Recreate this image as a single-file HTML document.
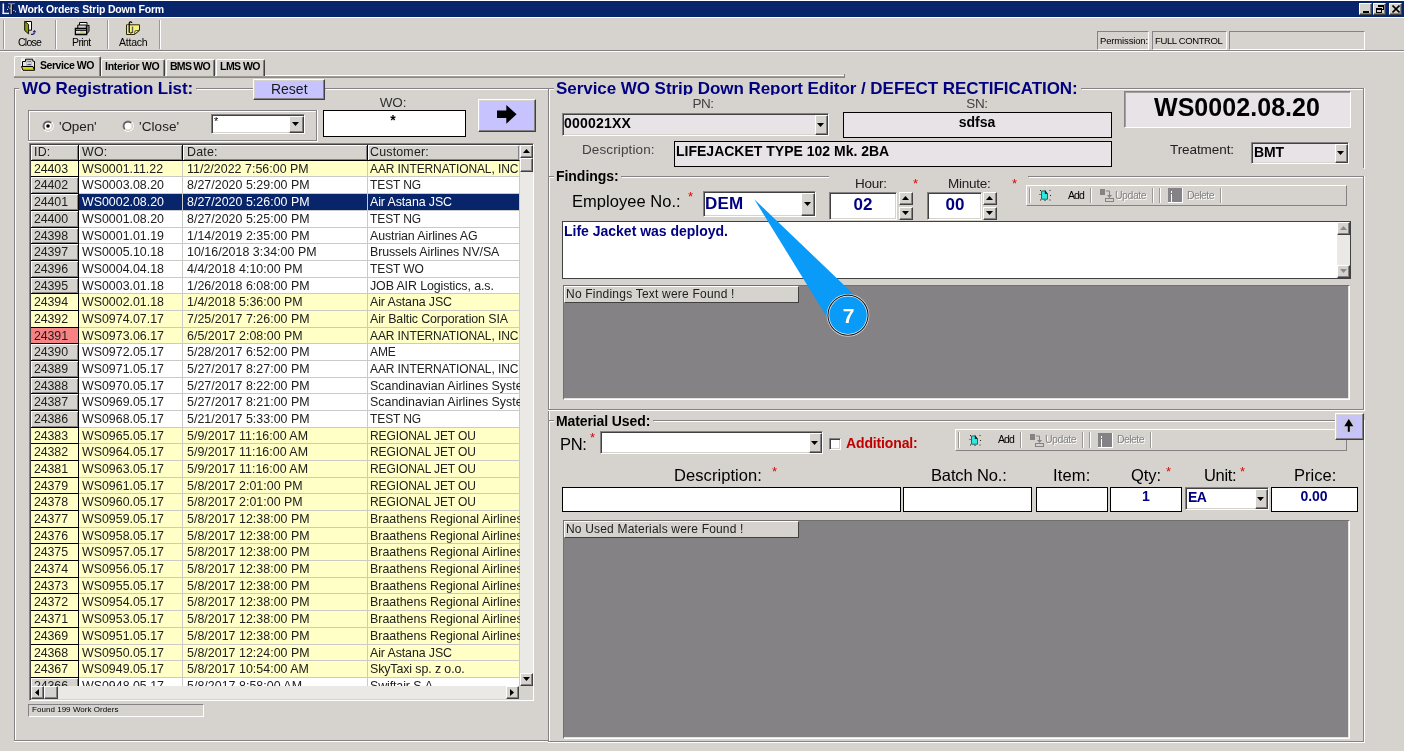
<!DOCTYPE html>
<html><head><meta charset="utf-8"><title>Work Orders Strip Down Form</title>
<style>
html,body{margin:0;padding:0}
body{transform:translateZ(0);filter:blur(0.4px);width:1405px;height:751px;overflow:hidden;background:#d6d3ce;position:relative;font-family:"Liberation Sans",sans-serif;}
body div,body svg.a,.grid div{position:absolute;box-sizing:border-box}
.t{white-space:nowrap;will-change:transform}
</style></head>
<body>
<div style="left:0px;top:0px;width:1405px;height:1px;background:#fff;"></div>
<div style="left:0px;top:1px;width:1405px;height:16px;background:#08246b;"></div>
<svg class="a" style="left:0px;top:0px" width="18" height="17" viewBox="0 0 18 17"><rect x="2.500" y="3.500" width="1.600" height="10.500" fill="#f0f0f0"/><rect x="2.500" y="12.700" width="6.500" height="1.400" fill="#f0f0f0"/><rect x="8" y="3" width="7" height="1.200" fill="#6878b0"/><rect x="10.500" y="4" width="1.600" height="10" fill="#b8b070"/><rect x="12.100" y="5" width="1" height="9" fill="#080820"/><rect x="8" y="6.500" width="1" height="1" fill="#e8e8ff"/><rect x="7" y="9" width="1" height="1" fill="#e8e8ff"/><rect x="9.500" y="7.800" width="1" height="1" fill="#e8e8ff"/><rect x="13.300" y="10" width="1" height="1" fill="#e8e8ff"/><rect x="15" y="11.200" width="1" height="1" fill="#e8e8ff"/></svg>
<div class="t" style="left:18px;top:2.86px;font-size:10.5px;line-height:13px;color:#fff;font-weight:bold;letter-spacing:-0.182px;">Work Orders Strip Down Form</div>
<div style="left:1359px;top:3px;width:13px;height:12px;background:#d6d3ce;border:1px solid;border-color:#fff #424142 #424142 #fff;box-shadow:inset -1px -1px 0 #848284,inset 1px 1px 0 #d6d3ce;"><svg class="a" style="left:3px;top:7px" width="6" height="2"><rect width="6" height="2" fill="#000"/></svg></div>
<div style="left:1373px;top:3px;width:13px;height:12px;background:#d6d3ce;border:1px solid;border-color:#fff #424142 #424142 #fff;box-shadow:inset -1px -1px 0 #848284,inset 1px 1px 0 #d6d3ce;"><svg class="a" style="left:1px;top:0px" width="10" height="10" viewBox="0 0 10 10"><path d="M3 1h6v2h-6zM8 1h1v5h-1zM7 5h2v1h-2zM1 4h6v2h-6zM1 4h1v5h-1zM6 4h1v5h-1zM1 8h6v1h-6z" fill="#000"/></svg></div>
<div style="left:1389px;top:3px;width:13px;height:12px;background:#d6d3ce;border:1px solid;border-color:#fff #424142 #424142 #fff;box-shadow:inset -1px -1px 0 #848284,inset 1px 1px 0 #d6d3ce;"><svg class="a" style="left:2px;top:1px" width="8" height="8" viewBox="0 0 8 8"><path d="M0.5 0.5l7 7M7.5 0.5l-7 7" stroke="#000" stroke-width="1.6"/></svg></div>
<div style="left:0px;top:17px;width:1404px;height:1px;background:#fff;"></div>
<div style="left:3px;top:20px;width:1px;height:29px;background:#9a9894;"></div>
<div style="left:4px;top:20px;width:1px;height:29px;background:#fff;"></div>
<div style="left:55px;top:20px;width:1px;height:29px;background:#9a9894;"></div>
<div style="left:56px;top:20px;width:1px;height:29px;background:#fff;"></div>
<div style="left:107px;top:20px;width:1px;height:29px;background:#9a9894;"></div>
<div style="left:108px;top:20px;width:1px;height:29px;background:#fff;"></div>
<div style="left:159px;top:20px;width:1px;height:29px;background:#9a9894;"></div>
<div style="left:160px;top:20px;width:1px;height:29px;background:#fff;"></div>
<div style="left:0px;top:50px;width:1404px;height:1px;background:#848284;"></div>
<div style="left:0px;top:51px;width:1404px;height:1px;background:#fff;"></div>
<div style="left:1404px;top:0px;width:1px;height:751px;background:#fff;"></div>
<svg class="a" style="left:18px;top:18px" width="28" height="20" viewBox="18 18 28 20">
<path d="M25.200 21.500h6.300v8.700h-6.300z" fill="#fffff8" stroke="#000" stroke-width="1"/>
<path d="M24.700 21.300l3.900 3.200v9.400l-3.900-3.400z" fill="#8c9418" stroke="#181800" stroke-width="1" stroke-linejoin="round"/>
<path d="M31 34.300h1.700q1.700 0 1.700-1.800" fill="none" stroke="#18187c" stroke-width="1.300"/>
<path d="M32.600 32.200h3.700l-1.900-2.300z" fill="#18187c"/></svg>
<svg class="a" style="left:68px;top:18px" width="28" height="20" viewBox="68 18 28 20">
<path d="M79.500 22.500h7.500v3.500h-7.500z" fill="#fff" stroke="#000"/>
<path d="M77.800 25h8.500v3.500h-8.500z" fill="#d0d0d0" stroke="#000"/>
<path d="M86.700 26.200l2.300-1v6.300l-2.300 2.300z" fill="#a8a8a8" stroke="#000"/>
<path d="M75.400 28.500h11.200v6h-11.200z" fill="#ececec" stroke="#000" stroke-width="1.300"/>
<path d="M76 30.300h10" stroke="#000" stroke-width="1.100"/>
<rect x="80" y="31" width="4.500" height="1.600" fill="#c8e040"/>
<path d="M76.500 33.300h9" stroke="#909090"/></svg>
<svg class="a" style="left:120px;top:18px" width="28" height="20" viewBox="120 18 28 20">
<path d="M126.500 24.800h13v5.500l-5 4.200h-8z" fill="#f4f47c" stroke="#302800" stroke-width="1"/>
<path d="M127 25.300h2.200v8.700h-2.200z" fill="#e4e0b0"/>
<path d="M134.500 34.300l.5-3.400 4.300-.6z" fill="#fffff0" stroke="#302800" stroke-width=".8"/>
<path d="M129.200 32.500v-9.300q0-1.300 1.300-1.300t1.300 1.100" fill="none" stroke="#000" stroke-width="1.200"/>
<path d="M132.500 26.500v6.300" stroke="#606060" stroke-width="1.400"/>
<path d="M129.200 32.300q1.600 1.700 3.300 0" fill="none" stroke="#000"/></svg>
<div class="t" style="left:18px;top:36.16px;font-size:10.5px;line-height:13px;color:#000;letter-spacing:-0.769px;">Close</div>
<div class="t" style="left:72px;top:36.16px;font-size:10.5px;line-height:13px;color:#000;letter-spacing:-0.618px;">Print</div>
<div class="t" style="left:119px;top:36.16px;font-size:10.5px;line-height:13px;color:#000;letter-spacing:-0.211px;">Attach</div>
<div style="left:1097px;top:31px;width:52px;height:19px;border:1px solid;border-color:#848284 #fff #fff #848284;"></div>
<div style="left:1152px;top:31px;width:75px;height:19px;border:1px solid;border-color:#848284 #fff #fff #848284;"></div>
<div style="left:1229px;top:31px;width:136px;height:19px;border:1px solid;border-color:#848284 #fff #fff #848284;"></div>
<div class="t" style="left:1099.5px;top:35.01px;font-size:9.5px;line-height:11px;color:#000;letter-spacing:-0.148px;">Permission:</div>
<div class="t" style="left:1155px;top:35.01px;font-size:9.5px;line-height:11px;color:#000;letter-spacing:-0.372px;">FULL CONTROL</div>
<div style="left:101px;top:75px;width:743px;height:1px;background:#fff;"></div>
<div style="left:14px;top:76px;width:831px;height:1px;background:#a09c98;"></div>
<div style="left:14px;top:77px;width:831px;height:1px;background:#8c8884;"></div>
<div style="left:844px;top:74px;width:1px;height:3px;background:#848284;"></div>
<div style="left:101px;top:59px;width:64px;height:17px;background:#d6d3ce;border-top:1px solid #fff;border-left:1px solid #fff;border-right:1px solid #424142;box-shadow:inset -1px 0 0 #848284;border-radius:2px 2px 0 0;"></div>
<div style="left:166px;top:59px;width:49px;height:17px;background:#d6d3ce;border-top:1px solid #fff;border-left:1px solid #fff;border-right:1px solid #424142;box-shadow:inset -1px 0 0 #848284;border-radius:2px 2px 0 0;"></div>
<div style="left:216px;top:59px;width:49px;height:17px;background:#d6d3ce;border-top:1px solid #fff;border-left:1px solid #fff;border-right:1px solid #424142;box-shadow:inset -1px 0 0 #848284;border-radius:2px 2px 0 0;"></div>
<div style="left:14px;top:56px;width:87px;height:20px;background:#d6d3ce;border-top:1px solid #fff;border-left:1px solid #fff;border-right:1px solid #424142;box-shadow:inset -1px 0 0 #848284;border-radius:2px 2px 0 0;"></div>
<svg class="a" style="left:14px;top:54px" width="28" height="20" viewBox="14 54 28 20">
<rect x="21" y="58.300" width="14" height="13" fill="#f2f2ee"/>
<path d="M22.500 66.500v-5h3v-2.300h7.300v2h1.700v9" fill="#e4e4e4" stroke="#000" stroke-width="1"/>
<rect x="26.500" y="60.300" width="5" height="5.200" fill="#f8f8f8" stroke="#a8a8a8" stroke-width=".6"/>
<path d="M27.300 61.700h3.700" stroke="#687070" stroke-width="1.200"/>
<path d="M27.300 64.300h3.700" stroke="#202060" stroke-width=".9"/>
<path d="M21.500 66.500h11.500l1.500 3.800h-11.500z" fill="#d4d418" stroke="#000" stroke-width="1"/></svg>
<div class="t" style="left:40px;top:59.06px;font-size:10.5px;line-height:13px;color:#000;font-weight:bold;letter-spacing:-0.436px;">Service WO</div>
<div class="t" style="left:105px;top:59.86px;font-size:10.5px;line-height:13px;color:#000;font-weight:bold;letter-spacing:-0.242px;">Interior WO</div>
<div class="t" style="left:170px;top:59.86px;font-size:10.5px;line-height:13px;color:#000;font-weight:bold;letter-spacing:-0.721px;">BMS WO</div>
<div class="t" style="left:220px;top:59.86px;font-size:10.5px;line-height:13px;color:#000;font-weight:bold;letter-spacing:-0.526px;">LMS WO</div>
<div style="left:14px;top:88px;width:5px;height:1px;background:#848284;"></div>
<div style="left:15px;top:89px;width:4px;height:1px;background:#fff;"></div>
<div style="left:196px;top:88px;width:57px;height:1px;background:#848284;"></div>
<div style="left:197px;top:89px;width:56px;height:1px;background:#fff;"></div>
<div style="left:325px;top:88px;width:224px;height:1px;background:#848284;"></div>
<div style="left:326px;top:89px;width:223px;height:1px;background:#fff;"></div>
<div style="left:14px;top:88px;width:1px;height:653px;background:#848284;"></div>
<div style="left:15px;top:89px;width:1px;height:652px;background:#fff;"></div>
<div style="left:548px;top:88px;width:1px;height:653px;background:#848284;"></div>
<div style="left:549px;top:88px;width:1px;height:654px;background:#fff;"></div>
<div style="left:14px;top:740px;width:535px;height:1px;background:#848284;"></div>
<div style="left:14px;top:741px;width:536px;height:1px;background:#fff;"></div>
<div class="t" style="left:22px;top:78.81px;font-size:17px;line-height:20px;color:#000080;font-weight:bold;letter-spacing:-0.132px;">WO Registration List:</div>
<div style="left:253px;top:79px;width:72px;height:21px;background:#c6c3ff;border:1px solid;border-color:#fff #424142 #424142 #fff;box-shadow:inset -1px -1px 0 #848284,inset 1px 1px 0 #d6d3ce;"></div>
<div class="t" style="left:270.5px;top:81.45px;font-size:14px;line-height:17px;color:#181818;letter-spacing:-0.014px;">Reset</div>
<div style="left:28px;top:110px;width:289px;height:1px;background:#848284;"></div>
<div style="left:29px;top:111px;width:288px;height:1px;background:#fff;"></div>
<div style="left:28px;top:110px;width:1px;height:31px;background:#848284;"></div>
<div style="left:29px;top:111px;width:1px;height:30px;background:#fff;"></div>
<div style="left:316px;top:110px;width:1px;height:31px;background:#848284;"></div>
<div style="left:317px;top:110px;width:1px;height:32px;background:#fff;"></div>
<div style="left:28px;top:140px;width:289px;height:1px;background:#848284;"></div>
<div style="left:28px;top:141px;width:290px;height:1px;background:#fff;"></div>
<svg class="a" style="left:42px;top:120px" width="12" height="12" viewBox="0 0 12 12"><circle cx="6" cy="6" r="5.500" fill="#848284"/><path d="M1.800 10.200A5.500 5.500 0 0 0 10.200 1.800z" fill="#fff"/><circle cx="6" cy="6" r="4.500" fill="#424142"/><path d="M2.500 9.500A4.500 4.500 0 0 0 9.500 2.500z" fill="#d6d3ce"/><circle cx="6" cy="6" r="3.600" fill="#fff"/><circle cx="6" cy="6" r="1.8" fill="#000"/></svg>
<svg class="a" style="left:122px;top:120px" width="12" height="12" viewBox="0 0 12 12"><circle cx="6" cy="6" r="5.500" fill="#848284"/><path d="M1.800 10.200A5.500 5.500 0 0 0 10.200 1.800z" fill="#fff"/><circle cx="6" cy="6" r="4.500" fill="#424142"/><path d="M2.500 9.500A4.500 4.500 0 0 0 9.500 2.500z" fill="#d6d3ce"/><circle cx="6" cy="6" r="3.600" fill="#fff"/></svg>
<div class="t" style="left:59px;top:119.32px;font-size:13.5px;line-height:16px;color:#202020;letter-spacing:-0.113px;">&#x27;Open&#x27;</div>
<div class="t" style="left:139px;top:119.32px;font-size:13.5px;line-height:16px;color:#202020;letter-spacing:0.076px;">&#x27;Close&#x27;</div>
<div style="left:211px;top:114px;width:94px;height:20px;background:#fff;border:1px solid;border-color:#848284 #fff #fff #848284;box-shadow:inset 1px 1px 0 #424142,inset -1px -1px 0 #d6d3ce;"></div>
<div style="left:289px;top:116px;width:15px;height:17px;background:#d6d3ce;border:1px solid;border-color:#fff #424142 #424142 #fff;box-shadow:inset -1px -1px 0 #848284,inset 1px 1px 0 #d6d3ce;"></div>
<svg class="a" style="left:292px;top:122px" width="7" height="4"><path d="M0 0h7l-3.5 4z" fill="#000"/></svg>
<div class="t" style="left:214px;top:114.69px;font-size:11px;line-height:13px;color:#000;">*</div>
<div class="t" style="left:193px;width:400px;text-align:center;top:95.02px;font-size:13.5px;line-height:16px;color:#303030;letter-spacing:-0.165px;">WO:</div>
<div style="left:323px;top:110px;width:143px;height:27px;background:#fff;border:1px solid #000;"></div>
<div class="t" style="left:193px;width:400px;text-align:center;top:111.85px;font-size:14px;line-height:17px;color:#000;font-weight:bold;">*</div>
<div style="left:478px;top:99px;width:58px;height:33px;background:#c6c3ff;border:1px solid;border-color:#fff #424142 #424142 #fff;box-shadow:inset -1px -1px 0 #848284,inset 1px 1px 0 #d6d3ce;"></div>
<svg class="a" style="left:496.500px;top:105.300px" width="20.500" height="18.700" viewBox="0 0 22 20"><path d="M0 6h10v-6l11 10-11 10v-6h-10z" fill="#000"/></svg>
<div style="left:29px;top:143px;width:505px;height:558px;background:#fff;border:1px solid;border-color:#848284 #fff #fff #848284;box-shadow:inset 1px 1px 0 #424142,inset -1px -1px 0 #d6d3ce;"></div>
<div class="grid" style="left:31px;top:145px;width:489px;height:541px;overflow:hidden;background:#fff;"><div style="left:0px;top:0px;width:48px;height:16px;background:#d6d3ce;border-right:1px solid #000;border-bottom:1px solid #000;box-shadow:inset 1px 1px 0 #fff,inset -1px -1px 0 #848284;"></div><div class="t" style="left:2.799999999999997px;top:0.00px;font-size:12.4px;line-height:14px;letter-spacing:0.2px;color:#202020;">ID:</div><div style="left:48px;top:0px;width:104px;height:16px;background:#d6d3ce;border-right:1px solid #000;border-bottom:1px solid #000;box-shadow:inset 1px 1px 0 #fff,inset -1px -1px 0 #848284;"></div><div class="t" style="left:50.8px;top:0.00px;font-size:12.4px;line-height:14px;letter-spacing:0.2px;color:#202020;">WO:</div><div style="left:152px;top:0px;width:185px;height:16px;background:#d6d3ce;border-right:1px solid #000;border-bottom:1px solid #000;box-shadow:inset 1px 1px 0 #fff,inset -1px -1px 0 #848284;"></div><div class="t" style="left:155.5px;top:0.00px;font-size:12.4px;line-height:14px;letter-spacing:0.2px;color:#202020;">Date:</div><div style="left:337px;top:0px;width:152px;height:16px;background:#d6d3ce;border-right:1px solid #d6d3ce;border-bottom:1px solid #000;box-shadow:inset 1px 1px 0 #fff,inset -1px -1px 0 #848284;"></div><div class="t" style="left:339px;top:0.00px;font-size:12.4px;line-height:14px;letter-spacing:0.2px;color:#202020;">Customer:</div><div style="left:0px;top:16px;width:48px;height:16px;background:#ffffc6;border-right:1px solid #000;border-bottom:1px solid #000;"></div><div class="t" style="left:2.799999999999997px;top:17.20px;font-size:12.4px;line-height:14px;letter-spacing:-0.1px;color:#202020;">24403</div><div style="left:48px;top:16px;width:104px;height:16px;background:#ffffc6;border-right:1px solid #cacac6;border-bottom:1px solid #cacac6;"></div><div class="t" style="left:50.8px;top:17.20px;font-size:12.4px;line-height:14px;letter-spacing:0px;color:#202020;width:100px;overflow:hidden;">WS0001.11.22</div><div style="left:152px;top:16px;width:185px;height:16px;background:#ffffc6;border-right:1px solid #cacac6;border-bottom:1px solid #cacac6;"></div><div class="t" style="left:155.5px;top:17.20px;font-size:12.4px;line-height:14px;letter-spacing:0.035px;color:#202020;width:181px;overflow:hidden;">11/2/2022 7:56:00 PM</div><div style="left:337px;top:16px;width:152px;height:16px;background:#ffffc6;border-right:1px solid #cacac6;border-bottom:1px solid #cacac6;"></div><div class="t" style="left:339px;top:17.34px;font-size:12px;line-height:14px;letter-spacing:-0.1px;color:#202020;width:150px;overflow:hidden;">AAR INTERNATIONAL, INC</div><div style="left:0px;top:32px;width:48px;height:17px;background:#d6d3ce;border-right:1px solid #000;border-bottom:1px solid #000;box-shadow:inset 1px 1px 0 #fff,inset -1px -1px 0 #848284;"></div><div class="t" style="left:2.799999999999997px;top:33.20px;font-size:12.4px;line-height:14px;letter-spacing:-0.1px;color:#202020;">24402</div><div style="left:48px;top:32px;width:104px;height:17px;background:#fff;border-right:1px solid #cacac6;border-bottom:1px solid #cacac6;"></div><div class="t" style="left:50.8px;top:33.20px;font-size:12.4px;line-height:14px;letter-spacing:0px;color:#202020;width:100px;overflow:hidden;">WS0003.08.20</div><div style="left:152px;top:32px;width:185px;height:17px;background:#fff;border-right:1px solid #cacac6;border-bottom:1px solid #cacac6;"></div><div class="t" style="left:155.5px;top:33.20px;font-size:12.4px;line-height:14px;letter-spacing:0.035px;color:#202020;width:181px;overflow:hidden;">8/27/2020 5:29:00 PM</div><div style="left:337px;top:32px;width:152px;height:17px;background:#fff;border-right:1px solid #cacac6;border-bottom:1px solid #cacac6;"></div><div class="t" style="left:339px;top:33.34px;font-size:12px;line-height:14px;letter-spacing:-0.1px;color:#202020;width:150px;overflow:hidden;">TEST NG</div><div style="left:0px;top:49px;width:48px;height:17px;background:#d6d3ce;border-right:1px solid #000;border-bottom:1px solid #000;box-shadow:inset 1px 1px 0 #fff,inset -1px -1px 0 #848284;"></div><div class="t" style="left:2.799999999999997px;top:50.20px;font-size:12.4px;line-height:14px;letter-spacing:-0.1px;color:#202020;">24401</div><div style="left:48px;top:49px;width:104px;height:17px;background:#08246b;border-right:1px solid #cacac6;border-bottom:1px solid #cacac6;"></div><div class="t" style="left:50.8px;top:50.20px;font-size:12.4px;line-height:14px;letter-spacing:0px;color:#fff;width:100px;overflow:hidden;">WS0002.08.20</div><div style="left:152px;top:49px;width:185px;height:17px;background:#08246b;border-right:1px solid #cacac6;border-bottom:1px solid #cacac6;"></div><div class="t" style="left:155.5px;top:50.20px;font-size:12.4px;line-height:14px;letter-spacing:0.035px;color:#fff;width:181px;overflow:hidden;">8/27/2020 5:26:00 PM</div><div style="left:337px;top:49px;width:152px;height:17px;background:#08246b;border-right:1px solid #cacac6;border-bottom:1px solid #cacac6;"></div><div class="t" style="left:339px;top:50.20px;font-size:12.4px;line-height:14px;letter-spacing:-0.1px;color:#fff;width:150px;overflow:hidden;">Air Astana JSC</div><div style="left:0px;top:66px;width:48px;height:17px;background:#d6d3ce;border-right:1px solid #000;border-bottom:1px solid #000;box-shadow:inset 1px 1px 0 #fff,inset -1px -1px 0 #848284;"></div><div class="t" style="left:2.799999999999997px;top:67.20px;font-size:12.4px;line-height:14px;letter-spacing:-0.1px;color:#202020;">24400</div><div style="left:48px;top:66px;width:104px;height:17px;background:#fff;border-right:1px solid #cacac6;border-bottom:1px solid #cacac6;"></div><div class="t" style="left:50.8px;top:67.20px;font-size:12.4px;line-height:14px;letter-spacing:0px;color:#202020;width:100px;overflow:hidden;">WS0001.08.20</div><div style="left:152px;top:66px;width:185px;height:17px;background:#fff;border-right:1px solid #cacac6;border-bottom:1px solid #cacac6;"></div><div class="t" style="left:155.5px;top:67.20px;font-size:12.4px;line-height:14px;letter-spacing:0.035px;color:#202020;width:181px;overflow:hidden;">8/27/2020 5:25:00 PM</div><div style="left:337px;top:66px;width:152px;height:17px;background:#fff;border-right:1px solid #cacac6;border-bottom:1px solid #cacac6;"></div><div class="t" style="left:339px;top:67.34px;font-size:12px;line-height:14px;letter-spacing:-0.1px;color:#202020;width:150px;overflow:hidden;">TEST NG</div><div style="left:0px;top:83px;width:48px;height:16px;background:#d6d3ce;border-right:1px solid #000;border-bottom:1px solid #000;box-shadow:inset 1px 1px 0 #fff,inset -1px -1px 0 #848284;"></div><div class="t" style="left:2.799999999999997px;top:84.20px;font-size:12.4px;line-height:14px;letter-spacing:-0.1px;color:#202020;">24398</div><div style="left:48px;top:83px;width:104px;height:16px;background:#fff;border-right:1px solid #cacac6;border-bottom:1px solid #cacac6;"></div><div class="t" style="left:50.8px;top:84.20px;font-size:12.4px;line-height:14px;letter-spacing:0px;color:#202020;width:100px;overflow:hidden;">WS0001.01.19</div><div style="left:152px;top:83px;width:185px;height:16px;background:#fff;border-right:1px solid #cacac6;border-bottom:1px solid #cacac6;"></div><div class="t" style="left:155.5px;top:84.20px;font-size:12.4px;line-height:14px;letter-spacing:0.035px;color:#202020;width:181px;overflow:hidden;">1/14/2019 2:35:00 PM</div><div style="left:337px;top:83px;width:152px;height:16px;background:#fff;border-right:1px solid #cacac6;border-bottom:1px solid #cacac6;"></div><div class="t" style="left:339px;top:84.20px;font-size:12.4px;line-height:14px;letter-spacing:-0.1px;color:#202020;width:150px;overflow:hidden;">Austrian Airlines AG</div><div style="left:0px;top:99px;width:48px;height:17px;background:#d6d3ce;border-right:1px solid #000;border-bottom:1px solid #000;box-shadow:inset 1px 1px 0 #fff,inset -1px -1px 0 #848284;"></div><div class="t" style="left:2.799999999999997px;top:100.20px;font-size:12.4px;line-height:14px;letter-spacing:-0.1px;color:#202020;">24397</div><div style="left:48px;top:99px;width:104px;height:17px;background:#fff;border-right:1px solid #cacac6;border-bottom:1px solid #cacac6;"></div><div class="t" style="left:50.8px;top:100.20px;font-size:12.4px;line-height:14px;letter-spacing:0px;color:#202020;width:100px;overflow:hidden;">WS0005.10.18</div><div style="left:152px;top:99px;width:185px;height:17px;background:#fff;border-right:1px solid #cacac6;border-bottom:1px solid #cacac6;"></div><div class="t" style="left:155.5px;top:100.20px;font-size:12.4px;line-height:14px;letter-spacing:0.035px;color:#202020;width:181px;overflow:hidden;">10/16/2018 3:34:00 PM</div><div style="left:337px;top:99px;width:152px;height:17px;background:#fff;border-right:1px solid #cacac6;border-bottom:1px solid #cacac6;"></div><div class="t" style="left:339px;top:100.20px;font-size:12.4px;line-height:14px;letter-spacing:-0.1px;color:#202020;width:150px;overflow:hidden;">Brussels Airlines NV/SA</div><div style="left:0px;top:116px;width:48px;height:17px;background:#d6d3ce;border-right:1px solid #000;border-bottom:1px solid #000;box-shadow:inset 1px 1px 0 #fff,inset -1px -1px 0 #848284;"></div><div class="t" style="left:2.799999999999997px;top:117.20px;font-size:12.4px;line-height:14px;letter-spacing:-0.1px;color:#202020;">24396</div><div style="left:48px;top:116px;width:104px;height:17px;background:#fff;border-right:1px solid #cacac6;border-bottom:1px solid #cacac6;"></div><div class="t" style="left:50.8px;top:117.20px;font-size:12.4px;line-height:14px;letter-spacing:0px;color:#202020;width:100px;overflow:hidden;">WS0004.04.18</div><div style="left:152px;top:116px;width:185px;height:17px;background:#fff;border-right:1px solid #cacac6;border-bottom:1px solid #cacac6;"></div><div class="t" style="left:155.5px;top:117.20px;font-size:12.4px;line-height:14px;letter-spacing:0.035px;color:#202020;width:181px;overflow:hidden;">4/4/2018 4:10:00 PM</div><div style="left:337px;top:116px;width:152px;height:17px;background:#fff;border-right:1px solid #cacac6;border-bottom:1px solid #cacac6;"></div><div class="t" style="left:339px;top:117.34px;font-size:12px;line-height:14px;letter-spacing:-0.1px;color:#202020;width:150px;overflow:hidden;">TEST WO</div><div style="left:0px;top:133px;width:48px;height:16px;background:#d6d3ce;border-right:1px solid #000;border-bottom:1px solid #000;box-shadow:inset 1px 1px 0 #fff,inset -1px -1px 0 #848284;"></div><div class="t" style="left:2.799999999999997px;top:134.20px;font-size:12.4px;line-height:14px;letter-spacing:-0.1px;color:#202020;">24395</div><div style="left:48px;top:133px;width:104px;height:16px;background:#fff;border-right:1px solid #cacac6;border-bottom:1px solid #cacac6;"></div><div class="t" style="left:50.8px;top:134.20px;font-size:12.4px;line-height:14px;letter-spacing:0px;color:#202020;width:100px;overflow:hidden;">WS0003.01.18</div><div style="left:152px;top:133px;width:185px;height:16px;background:#fff;border-right:1px solid #cacac6;border-bottom:1px solid #cacac6;"></div><div class="t" style="left:155.5px;top:134.20px;font-size:12.4px;line-height:14px;letter-spacing:0.035px;color:#202020;width:181px;overflow:hidden;">1/26/2018 6:08:00 PM</div><div style="left:337px;top:133px;width:152px;height:16px;background:#fff;border-right:1px solid #cacac6;border-bottom:1px solid #cacac6;"></div><div class="t" style="left:339px;top:134.20px;font-size:12.4px;line-height:14px;letter-spacing:-0.1px;color:#202020;width:150px;overflow:hidden;">JOB AIR Logistics, a.s.</div><div style="left:0px;top:149px;width:48px;height:17px;background:#ffffc6;border-right:1px solid #000;border-bottom:1px solid #000;"></div><div class="t" style="left:2.799999999999997px;top:150.20px;font-size:12.4px;line-height:14px;letter-spacing:-0.1px;color:#202020;">24394</div><div style="left:48px;top:149px;width:104px;height:17px;background:#ffffc6;border-right:1px solid #cacac6;border-bottom:1px solid #cacac6;"></div><div class="t" style="left:50.8px;top:150.20px;font-size:12.4px;line-height:14px;letter-spacing:0px;color:#202020;width:100px;overflow:hidden;">WS0002.01.18</div><div style="left:152px;top:149px;width:185px;height:17px;background:#ffffc6;border-right:1px solid #cacac6;border-bottom:1px solid #cacac6;"></div><div class="t" style="left:155.5px;top:150.20px;font-size:12.4px;line-height:14px;letter-spacing:0.035px;color:#202020;width:181px;overflow:hidden;">1/4/2018 5:36:00 PM</div><div style="left:337px;top:149px;width:152px;height:17px;background:#ffffc6;border-right:1px solid #cacac6;border-bottom:1px solid #cacac6;"></div><div class="t" style="left:339px;top:150.20px;font-size:12.4px;line-height:14px;letter-spacing:-0.1px;color:#202020;width:150px;overflow:hidden;">Air Astana JSC</div><div style="left:0px;top:166px;width:48px;height:17px;background:#ffffc6;border-right:1px solid #000;border-bottom:1px solid #000;"></div><div class="t" style="left:2.799999999999997px;top:167.20px;font-size:12.4px;line-height:14px;letter-spacing:-0.1px;color:#202020;">24392</div><div style="left:48px;top:166px;width:104px;height:17px;background:#ffffc6;border-right:1px solid #cacac6;border-bottom:1px solid #cacac6;"></div><div class="t" style="left:50.8px;top:167.20px;font-size:12.4px;line-height:14px;letter-spacing:0px;color:#202020;width:100px;overflow:hidden;">WS0974.07.17</div><div style="left:152px;top:166px;width:185px;height:17px;background:#ffffc6;border-right:1px solid #cacac6;border-bottom:1px solid #cacac6;"></div><div class="t" style="left:155.5px;top:167.20px;font-size:12.4px;line-height:14px;letter-spacing:0.035px;color:#202020;width:181px;overflow:hidden;">7/25/2017 7:26:00 PM</div><div style="left:337px;top:166px;width:152px;height:17px;background:#ffffc6;border-right:1px solid #cacac6;border-bottom:1px solid #cacac6;"></div><div class="t" style="left:339px;top:167.20px;font-size:12.4px;line-height:14px;letter-spacing:-0.1px;color:#202020;width:150px;overflow:hidden;">Air Baltic Corporation SIA</div><div style="left:0px;top:183px;width:48px;height:16px;background:#f78284;border-right:1px solid #000;border-bottom:1px solid #000;"></div><div class="t" style="left:2.799999999999997px;top:184.20px;font-size:12.4px;line-height:14px;letter-spacing:-0.1px;color:#202020;">24391</div><div style="left:48px;top:183px;width:104px;height:16px;background:#ffffc6;border-right:1px solid #cacac6;border-bottom:1px solid #cacac6;"></div><div class="t" style="left:50.8px;top:184.20px;font-size:12.4px;line-height:14px;letter-spacing:0px;color:#202020;width:100px;overflow:hidden;">WS0973.06.17</div><div style="left:152px;top:183px;width:185px;height:16px;background:#ffffc6;border-right:1px solid #cacac6;border-bottom:1px solid #cacac6;"></div><div class="t" style="left:155.5px;top:184.20px;font-size:12.4px;line-height:14px;letter-spacing:0.035px;color:#202020;width:181px;overflow:hidden;">6/5/2017 2:08:00 PM</div><div style="left:337px;top:183px;width:152px;height:16px;background:#ffffc6;border-right:1px solid #cacac6;border-bottom:1px solid #cacac6;"></div><div class="t" style="left:339px;top:184.34px;font-size:12px;line-height:14px;letter-spacing:-0.1px;color:#202020;width:150px;overflow:hidden;">AAR INTERNATIONAL, INC</div><div style="left:0px;top:199px;width:48px;height:17px;background:#d6d3ce;border-right:1px solid #000;border-bottom:1px solid #000;box-shadow:inset 1px 1px 0 #fff,inset -1px -1px 0 #848284;"></div><div class="t" style="left:2.799999999999997px;top:200.20px;font-size:12.4px;line-height:14px;letter-spacing:-0.1px;color:#202020;">24390</div><div style="left:48px;top:199px;width:104px;height:17px;background:#fff;border-right:1px solid #cacac6;border-bottom:1px solid #cacac6;"></div><div class="t" style="left:50.8px;top:200.20px;font-size:12.4px;line-height:14px;letter-spacing:0px;color:#202020;width:100px;overflow:hidden;">WS0972.05.17</div><div style="left:152px;top:199px;width:185px;height:17px;background:#fff;border-right:1px solid #cacac6;border-bottom:1px solid #cacac6;"></div><div class="t" style="left:155.5px;top:200.20px;font-size:12.4px;line-height:14px;letter-spacing:0.035px;color:#202020;width:181px;overflow:hidden;">5/28/2017 6:52:00 PM</div><div style="left:337px;top:199px;width:152px;height:17px;background:#fff;border-right:1px solid #cacac6;border-bottom:1px solid #cacac6;"></div><div class="t" style="left:339px;top:200.34px;font-size:12px;line-height:14px;letter-spacing:-0.1px;color:#202020;width:150px;overflow:hidden;">AME</div><div style="left:0px;top:216px;width:48px;height:17px;background:#d6d3ce;border-right:1px solid #000;border-bottom:1px solid #000;box-shadow:inset 1px 1px 0 #fff,inset -1px -1px 0 #848284;"></div><div class="t" style="left:2.799999999999997px;top:217.20px;font-size:12.4px;line-height:14px;letter-spacing:-0.1px;color:#202020;">24389</div><div style="left:48px;top:216px;width:104px;height:17px;background:#fff;border-right:1px solid #cacac6;border-bottom:1px solid #cacac6;"></div><div class="t" style="left:50.8px;top:217.20px;font-size:12.4px;line-height:14px;letter-spacing:0px;color:#202020;width:100px;overflow:hidden;">WS0971.05.17</div><div style="left:152px;top:216px;width:185px;height:17px;background:#fff;border-right:1px solid #cacac6;border-bottom:1px solid #cacac6;"></div><div class="t" style="left:155.5px;top:217.20px;font-size:12.4px;line-height:14px;letter-spacing:0.035px;color:#202020;width:181px;overflow:hidden;">5/27/2017 8:27:00 PM</div><div style="left:337px;top:216px;width:152px;height:17px;background:#fff;border-right:1px solid #cacac6;border-bottom:1px solid #cacac6;"></div><div class="t" style="left:339px;top:217.34px;font-size:12px;line-height:14px;letter-spacing:-0.1px;color:#202020;width:150px;overflow:hidden;">AAR INTERNATIONAL, INC</div><div style="left:0px;top:233px;width:48px;height:16px;background:#d6d3ce;border-right:1px solid #000;border-bottom:1px solid #000;box-shadow:inset 1px 1px 0 #fff,inset -1px -1px 0 #848284;"></div><div class="t" style="left:2.799999999999997px;top:234.20px;font-size:12.4px;line-height:14px;letter-spacing:-0.1px;color:#202020;">24388</div><div style="left:48px;top:233px;width:104px;height:16px;background:#fff;border-right:1px solid #cacac6;border-bottom:1px solid #cacac6;"></div><div class="t" style="left:50.8px;top:234.20px;font-size:12.4px;line-height:14px;letter-spacing:0px;color:#202020;width:100px;overflow:hidden;">WS0970.05.17</div><div style="left:152px;top:233px;width:185px;height:16px;background:#fff;border-right:1px solid #cacac6;border-bottom:1px solid #cacac6;"></div><div class="t" style="left:155.5px;top:234.20px;font-size:12.4px;line-height:14px;letter-spacing:0.035px;color:#202020;width:181px;overflow:hidden;">5/27/2017 8:22:00 PM</div><div style="left:337px;top:233px;width:152px;height:16px;background:#fff;border-right:1px solid #cacac6;border-bottom:1px solid #cacac6;"></div><div class="t" style="left:339px;top:234.20px;font-size:12.4px;line-height:14px;letter-spacing:0.015px;color:#202020;width:150px;overflow:hidden;">Scandinavian Airlines System</div><div style="left:0px;top:249px;width:48px;height:17px;background:#d6d3ce;border-right:1px solid #000;border-bottom:1px solid #000;box-shadow:inset 1px 1px 0 #fff,inset -1px -1px 0 #848284;"></div><div class="t" style="left:2.799999999999997px;top:250.20px;font-size:12.4px;line-height:14px;letter-spacing:-0.1px;color:#202020;">24387</div><div style="left:48px;top:249px;width:104px;height:17px;background:#fff;border-right:1px solid #cacac6;border-bottom:1px solid #cacac6;"></div><div class="t" style="left:50.8px;top:250.20px;font-size:12.4px;line-height:14px;letter-spacing:0px;color:#202020;width:100px;overflow:hidden;">WS0969.05.17</div><div style="left:152px;top:249px;width:185px;height:17px;background:#fff;border-right:1px solid #cacac6;border-bottom:1px solid #cacac6;"></div><div class="t" style="left:155.5px;top:250.20px;font-size:12.4px;line-height:14px;letter-spacing:0.035px;color:#202020;width:181px;overflow:hidden;">5/27/2017 8:21:00 PM</div><div style="left:337px;top:249px;width:152px;height:17px;background:#fff;border-right:1px solid #cacac6;border-bottom:1px solid #cacac6;"></div><div class="t" style="left:339px;top:250.20px;font-size:12.4px;line-height:14px;letter-spacing:0.015px;color:#202020;width:150px;overflow:hidden;">Scandinavian Airlines System</div><div style="left:0px;top:266px;width:48px;height:17px;background:#d6d3ce;border-right:1px solid #000;border-bottom:1px solid #000;box-shadow:inset 1px 1px 0 #fff,inset -1px -1px 0 #848284;"></div><div class="t" style="left:2.799999999999997px;top:267.20px;font-size:12.4px;line-height:14px;letter-spacing:-0.1px;color:#202020;">24386</div><div style="left:48px;top:266px;width:104px;height:17px;background:#fff;border-right:1px solid #cacac6;border-bottom:1px solid #cacac6;"></div><div class="t" style="left:50.8px;top:267.20px;font-size:12.4px;line-height:14px;letter-spacing:0px;color:#202020;width:100px;overflow:hidden;">WS0968.05.17</div><div style="left:152px;top:266px;width:185px;height:17px;background:#fff;border-right:1px solid #cacac6;border-bottom:1px solid #cacac6;"></div><div class="t" style="left:155.5px;top:267.20px;font-size:12.4px;line-height:14px;letter-spacing:0.035px;color:#202020;width:181px;overflow:hidden;">5/21/2017 5:33:00 PM</div><div style="left:337px;top:266px;width:152px;height:17px;background:#fff;border-right:1px solid #cacac6;border-bottom:1px solid #cacac6;"></div><div class="t" style="left:339px;top:267.34px;font-size:12px;line-height:14px;letter-spacing:-0.1px;color:#202020;width:150px;overflow:hidden;">TEST NG</div><div style="left:0px;top:283px;width:48px;height:16px;background:#ffffc6;border-right:1px solid #000;border-bottom:1px solid #000;"></div><div class="t" style="left:2.799999999999997px;top:284.20px;font-size:12.4px;line-height:14px;letter-spacing:-0.1px;color:#202020;">24383</div><div style="left:48px;top:283px;width:104px;height:16px;background:#ffffc6;border-right:1px solid #cacac6;border-bottom:1px solid #cacac6;"></div><div class="t" style="left:50.8px;top:284.20px;font-size:12.4px;line-height:14px;letter-spacing:0px;color:#202020;width:100px;overflow:hidden;">WS0965.05.17</div><div style="left:152px;top:283px;width:185px;height:16px;background:#ffffc6;border-right:1px solid #cacac6;border-bottom:1px solid #cacac6;"></div><div class="t" style="left:155.5px;top:284.20px;font-size:12.4px;line-height:14px;letter-spacing:0.035px;color:#202020;width:181px;overflow:hidden;">5/9/2017 11:16:00 AM</div><div style="left:337px;top:283px;width:152px;height:16px;background:#ffffc6;border-right:1px solid #cacac6;border-bottom:1px solid #cacac6;"></div><div class="t" style="left:339px;top:284.34px;font-size:12px;line-height:14px;letter-spacing:-0.1px;color:#202020;width:150px;overflow:hidden;">REGIONAL JET OU</div><div style="left:0px;top:299px;width:48px;height:17px;background:#ffffc6;border-right:1px solid #000;border-bottom:1px solid #000;"></div><div class="t" style="left:2.799999999999997px;top:300.20px;font-size:12.4px;line-height:14px;letter-spacing:-0.1px;color:#202020;">24382</div><div style="left:48px;top:299px;width:104px;height:17px;background:#ffffc6;border-right:1px solid #cacac6;border-bottom:1px solid #cacac6;"></div><div class="t" style="left:50.8px;top:300.20px;font-size:12.4px;line-height:14px;letter-spacing:0px;color:#202020;width:100px;overflow:hidden;">WS0964.05.17</div><div style="left:152px;top:299px;width:185px;height:17px;background:#ffffc6;border-right:1px solid #cacac6;border-bottom:1px solid #cacac6;"></div><div class="t" style="left:155.5px;top:300.20px;font-size:12.4px;line-height:14px;letter-spacing:0.035px;color:#202020;width:181px;overflow:hidden;">5/9/2017 11:16:00 AM</div><div style="left:337px;top:299px;width:152px;height:17px;background:#ffffc6;border-right:1px solid #cacac6;border-bottom:1px solid #cacac6;"></div><div class="t" style="left:339px;top:300.34px;font-size:12px;line-height:14px;letter-spacing:-0.1px;color:#202020;width:150px;overflow:hidden;">REGIONAL JET OU</div><div style="left:0px;top:316px;width:48px;height:17px;background:#ffffc6;border-right:1px solid #000;border-bottom:1px solid #000;"></div><div class="t" style="left:2.799999999999997px;top:317.20px;font-size:12.4px;line-height:14px;letter-spacing:-0.1px;color:#202020;">24381</div><div style="left:48px;top:316px;width:104px;height:17px;background:#ffffc6;border-right:1px solid #cacac6;border-bottom:1px solid #cacac6;"></div><div class="t" style="left:50.8px;top:317.20px;font-size:12.4px;line-height:14px;letter-spacing:0px;color:#202020;width:100px;overflow:hidden;">WS0963.05.17</div><div style="left:152px;top:316px;width:185px;height:17px;background:#ffffc6;border-right:1px solid #cacac6;border-bottom:1px solid #cacac6;"></div><div class="t" style="left:155.5px;top:317.20px;font-size:12.4px;line-height:14px;letter-spacing:0.035px;color:#202020;width:181px;overflow:hidden;">5/9/2017 11:16:00 AM</div><div style="left:337px;top:316px;width:152px;height:17px;background:#ffffc6;border-right:1px solid #cacac6;border-bottom:1px solid #cacac6;"></div><div class="t" style="left:339px;top:317.34px;font-size:12px;line-height:14px;letter-spacing:-0.1px;color:#202020;width:150px;overflow:hidden;">REGIONAL JET OU</div><div style="left:0px;top:333px;width:48px;height:16px;background:#ffffc6;border-right:1px solid #000;border-bottom:1px solid #000;"></div><div class="t" style="left:2.799999999999997px;top:334.20px;font-size:12.4px;line-height:14px;letter-spacing:-0.1px;color:#202020;">24379</div><div style="left:48px;top:333px;width:104px;height:16px;background:#ffffc6;border-right:1px solid #cacac6;border-bottom:1px solid #cacac6;"></div><div class="t" style="left:50.8px;top:334.20px;font-size:12.4px;line-height:14px;letter-spacing:0px;color:#202020;width:100px;overflow:hidden;">WS0961.05.17</div><div style="left:152px;top:333px;width:185px;height:16px;background:#ffffc6;border-right:1px solid #cacac6;border-bottom:1px solid #cacac6;"></div><div class="t" style="left:155.5px;top:334.20px;font-size:12.4px;line-height:14px;letter-spacing:0.035px;color:#202020;width:181px;overflow:hidden;">5/8/2017 2:01:00 PM</div><div style="left:337px;top:333px;width:152px;height:16px;background:#ffffc6;border-right:1px solid #cacac6;border-bottom:1px solid #cacac6;"></div><div class="t" style="left:339px;top:334.34px;font-size:12px;line-height:14px;letter-spacing:-0.1px;color:#202020;width:150px;overflow:hidden;">REGIONAL JET OU</div><div style="left:0px;top:349px;width:48px;height:17px;background:#ffffc6;border-right:1px solid #000;border-bottom:1px solid #000;"></div><div class="t" style="left:2.799999999999997px;top:350.20px;font-size:12.4px;line-height:14px;letter-spacing:-0.1px;color:#202020;">24378</div><div style="left:48px;top:349px;width:104px;height:17px;background:#ffffc6;border-right:1px solid #cacac6;border-bottom:1px solid #cacac6;"></div><div class="t" style="left:50.8px;top:350.20px;font-size:12.4px;line-height:14px;letter-spacing:0px;color:#202020;width:100px;overflow:hidden;">WS0960.05.17</div><div style="left:152px;top:349px;width:185px;height:17px;background:#ffffc6;border-right:1px solid #cacac6;border-bottom:1px solid #cacac6;"></div><div class="t" style="left:155.5px;top:350.20px;font-size:12.4px;line-height:14px;letter-spacing:0.035px;color:#202020;width:181px;overflow:hidden;">5/8/2017 2:01:00 PM</div><div style="left:337px;top:349px;width:152px;height:17px;background:#ffffc6;border-right:1px solid #cacac6;border-bottom:1px solid #cacac6;"></div><div class="t" style="left:339px;top:350.34px;font-size:12px;line-height:14px;letter-spacing:-0.1px;color:#202020;width:150px;overflow:hidden;">REGIONAL JET OU</div><div style="left:0px;top:366px;width:48px;height:17px;background:#ffffc6;border-right:1px solid #000;border-bottom:1px solid #000;"></div><div class="t" style="left:2.799999999999997px;top:367.20px;font-size:12.4px;line-height:14px;letter-spacing:-0.1px;color:#202020;">24377</div><div style="left:48px;top:366px;width:104px;height:17px;background:#ffffc6;border-right:1px solid #cacac6;border-bottom:1px solid #cacac6;"></div><div class="t" style="left:50.8px;top:367.20px;font-size:12.4px;line-height:14px;letter-spacing:0px;color:#202020;width:100px;overflow:hidden;">WS0959.05.17</div><div style="left:152px;top:366px;width:185px;height:17px;background:#ffffc6;border-right:1px solid #cacac6;border-bottom:1px solid #cacac6;"></div><div class="t" style="left:155.5px;top:367.20px;font-size:12.4px;line-height:14px;letter-spacing:0.035px;color:#202020;width:181px;overflow:hidden;">5/8/2017 12:38:00 PM</div><div style="left:337px;top:366px;width:152px;height:17px;background:#ffffc6;border-right:1px solid #cacac6;border-bottom:1px solid #cacac6;"></div><div class="t" style="left:339px;top:367.20px;font-size:12.4px;line-height:14px;letter-spacing:0.015px;color:#202020;width:150px;overflow:hidden;">Braathens Regional Airlines</div><div style="left:0px;top:383px;width:48px;height:16px;background:#ffffc6;border-right:1px solid #000;border-bottom:1px solid #000;"></div><div class="t" style="left:2.799999999999997px;top:384.20px;font-size:12.4px;line-height:14px;letter-spacing:-0.1px;color:#202020;">24376</div><div style="left:48px;top:383px;width:104px;height:16px;background:#ffffc6;border-right:1px solid #cacac6;border-bottom:1px solid #cacac6;"></div><div class="t" style="left:50.8px;top:384.20px;font-size:12.4px;line-height:14px;letter-spacing:0px;color:#202020;width:100px;overflow:hidden;">WS0958.05.17</div><div style="left:152px;top:383px;width:185px;height:16px;background:#ffffc6;border-right:1px solid #cacac6;border-bottom:1px solid #cacac6;"></div><div class="t" style="left:155.5px;top:384.20px;font-size:12.4px;line-height:14px;letter-spacing:0.035px;color:#202020;width:181px;overflow:hidden;">5/8/2017 12:38:00 PM</div><div style="left:337px;top:383px;width:152px;height:16px;background:#ffffc6;border-right:1px solid #cacac6;border-bottom:1px solid #cacac6;"></div><div class="t" style="left:339px;top:384.20px;font-size:12.4px;line-height:14px;letter-spacing:0.015px;color:#202020;width:150px;overflow:hidden;">Braathens Regional Airlines</div><div style="left:0px;top:399px;width:48px;height:17px;background:#ffffc6;border-right:1px solid #000;border-bottom:1px solid #000;"></div><div class="t" style="left:2.799999999999997px;top:400.20px;font-size:12.4px;line-height:14px;letter-spacing:-0.1px;color:#202020;">24375</div><div style="left:48px;top:399px;width:104px;height:17px;background:#ffffc6;border-right:1px solid #cacac6;border-bottom:1px solid #cacac6;"></div><div class="t" style="left:50.8px;top:400.20px;font-size:12.4px;line-height:14px;letter-spacing:0px;color:#202020;width:100px;overflow:hidden;">WS0957.05.17</div><div style="left:152px;top:399px;width:185px;height:17px;background:#ffffc6;border-right:1px solid #cacac6;border-bottom:1px solid #cacac6;"></div><div class="t" style="left:155.5px;top:400.20px;font-size:12.4px;line-height:14px;letter-spacing:0.035px;color:#202020;width:181px;overflow:hidden;">5/8/2017 12:38:00 PM</div><div style="left:337px;top:399px;width:152px;height:17px;background:#ffffc6;border-right:1px solid #cacac6;border-bottom:1px solid #cacac6;"></div><div class="t" style="left:339px;top:400.20px;font-size:12.4px;line-height:14px;letter-spacing:0.015px;color:#202020;width:150px;overflow:hidden;">Braathens Regional Airlines</div><div style="left:0px;top:416px;width:48px;height:17px;background:#ffffc6;border-right:1px solid #000;border-bottom:1px solid #000;"></div><div class="t" style="left:2.799999999999997px;top:417.20px;font-size:12.4px;line-height:14px;letter-spacing:-0.1px;color:#202020;">24374</div><div style="left:48px;top:416px;width:104px;height:17px;background:#ffffc6;border-right:1px solid #cacac6;border-bottom:1px solid #cacac6;"></div><div class="t" style="left:50.8px;top:417.20px;font-size:12.4px;line-height:14px;letter-spacing:0px;color:#202020;width:100px;overflow:hidden;">WS0956.05.17</div><div style="left:152px;top:416px;width:185px;height:17px;background:#ffffc6;border-right:1px solid #cacac6;border-bottom:1px solid #cacac6;"></div><div class="t" style="left:155.5px;top:417.20px;font-size:12.4px;line-height:14px;letter-spacing:0.035px;color:#202020;width:181px;overflow:hidden;">5/8/2017 12:38:00 PM</div><div style="left:337px;top:416px;width:152px;height:17px;background:#ffffc6;border-right:1px solid #cacac6;border-bottom:1px solid #cacac6;"></div><div class="t" style="left:339px;top:417.20px;font-size:12.4px;line-height:14px;letter-spacing:0.015px;color:#202020;width:150px;overflow:hidden;">Braathens Regional Airlines</div><div style="left:0px;top:433px;width:48px;height:16px;background:#ffffc6;border-right:1px solid #000;border-bottom:1px solid #000;"></div><div class="t" style="left:2.799999999999997px;top:434.20px;font-size:12.4px;line-height:14px;letter-spacing:-0.1px;color:#202020;">24373</div><div style="left:48px;top:433px;width:104px;height:16px;background:#ffffc6;border-right:1px solid #cacac6;border-bottom:1px solid #cacac6;"></div><div class="t" style="left:50.8px;top:434.20px;font-size:12.4px;line-height:14px;letter-spacing:0px;color:#202020;width:100px;overflow:hidden;">WS0955.05.17</div><div style="left:152px;top:433px;width:185px;height:16px;background:#ffffc6;border-right:1px solid #cacac6;border-bottom:1px solid #cacac6;"></div><div class="t" style="left:155.5px;top:434.20px;font-size:12.4px;line-height:14px;letter-spacing:0.035px;color:#202020;width:181px;overflow:hidden;">5/8/2017 12:38:00 PM</div><div style="left:337px;top:433px;width:152px;height:16px;background:#ffffc6;border-right:1px solid #cacac6;border-bottom:1px solid #cacac6;"></div><div class="t" style="left:339px;top:434.20px;font-size:12.4px;line-height:14px;letter-spacing:0.015px;color:#202020;width:150px;overflow:hidden;">Braathens Regional Airlines</div><div style="left:0px;top:449px;width:48px;height:17px;background:#ffffc6;border-right:1px solid #000;border-bottom:1px solid #000;"></div><div class="t" style="left:2.799999999999997px;top:450.20px;font-size:12.4px;line-height:14px;letter-spacing:-0.1px;color:#202020;">24372</div><div style="left:48px;top:449px;width:104px;height:17px;background:#ffffc6;border-right:1px solid #cacac6;border-bottom:1px solid #cacac6;"></div><div class="t" style="left:50.8px;top:450.20px;font-size:12.4px;line-height:14px;letter-spacing:0px;color:#202020;width:100px;overflow:hidden;">WS0954.05.17</div><div style="left:152px;top:449px;width:185px;height:17px;background:#ffffc6;border-right:1px solid #cacac6;border-bottom:1px solid #cacac6;"></div><div class="t" style="left:155.5px;top:450.20px;font-size:12.4px;line-height:14px;letter-spacing:0.035px;color:#202020;width:181px;overflow:hidden;">5/8/2017 12:38:00 PM</div><div style="left:337px;top:449px;width:152px;height:17px;background:#ffffc6;border-right:1px solid #cacac6;border-bottom:1px solid #cacac6;"></div><div class="t" style="left:339px;top:450.20px;font-size:12.4px;line-height:14px;letter-spacing:0.015px;color:#202020;width:150px;overflow:hidden;">Braathens Regional Airlines</div><div style="left:0px;top:466px;width:48px;height:17px;background:#ffffc6;border-right:1px solid #000;border-bottom:1px solid #000;"></div><div class="t" style="left:2.799999999999997px;top:467.20px;font-size:12.4px;line-height:14px;letter-spacing:-0.1px;color:#202020;">24371</div><div style="left:48px;top:466px;width:104px;height:17px;background:#ffffc6;border-right:1px solid #cacac6;border-bottom:1px solid #cacac6;"></div><div class="t" style="left:50.8px;top:467.20px;font-size:12.4px;line-height:14px;letter-spacing:0px;color:#202020;width:100px;overflow:hidden;">WS0953.05.17</div><div style="left:152px;top:466px;width:185px;height:17px;background:#ffffc6;border-right:1px solid #cacac6;border-bottom:1px solid #cacac6;"></div><div class="t" style="left:155.5px;top:467.20px;font-size:12.4px;line-height:14px;letter-spacing:0.035px;color:#202020;width:181px;overflow:hidden;">5/8/2017 12:38:00 PM</div><div style="left:337px;top:466px;width:152px;height:17px;background:#ffffc6;border-right:1px solid #cacac6;border-bottom:1px solid #cacac6;"></div><div class="t" style="left:339px;top:467.20px;font-size:12.4px;line-height:14px;letter-spacing:0.015px;color:#202020;width:150px;overflow:hidden;">Braathens Regional Airlines</div><div style="left:0px;top:483px;width:48px;height:17px;background:#ffffc6;border-right:1px solid #000;border-bottom:1px solid #000;"></div><div class="t" style="left:2.799999999999997px;top:484.20px;font-size:12.4px;line-height:14px;letter-spacing:-0.1px;color:#202020;">24369</div><div style="left:48px;top:483px;width:104px;height:17px;background:#ffffc6;border-right:1px solid #cacac6;border-bottom:1px solid #cacac6;"></div><div class="t" style="left:50.8px;top:484.20px;font-size:12.4px;line-height:14px;letter-spacing:0px;color:#202020;width:100px;overflow:hidden;">WS0951.05.17</div><div style="left:152px;top:483px;width:185px;height:17px;background:#ffffc6;border-right:1px solid #cacac6;border-bottom:1px solid #cacac6;"></div><div class="t" style="left:155.5px;top:484.20px;font-size:12.4px;line-height:14px;letter-spacing:0.035px;color:#202020;width:181px;overflow:hidden;">5/8/2017 12:38:00 PM</div><div style="left:337px;top:483px;width:152px;height:17px;background:#ffffc6;border-right:1px solid #cacac6;border-bottom:1px solid #cacac6;"></div><div class="t" style="left:339px;top:484.20px;font-size:12.4px;line-height:14px;letter-spacing:0.015px;color:#202020;width:150px;overflow:hidden;">Braathens Regional Airlines</div><div style="left:0px;top:500px;width:48px;height:16px;background:#ffffc6;border-right:1px solid #000;border-bottom:1px solid #000;"></div><div class="t" style="left:2.799999999999997px;top:501.20px;font-size:12.4px;line-height:14px;letter-spacing:-0.1px;color:#202020;">24368</div><div style="left:48px;top:500px;width:104px;height:16px;background:#ffffc6;border-right:1px solid #cacac6;border-bottom:1px solid #cacac6;"></div><div class="t" style="left:50.8px;top:501.20px;font-size:12.4px;line-height:14px;letter-spacing:0px;color:#202020;width:100px;overflow:hidden;">WS0950.05.17</div><div style="left:152px;top:500px;width:185px;height:16px;background:#ffffc6;border-right:1px solid #cacac6;border-bottom:1px solid #cacac6;"></div><div class="t" style="left:155.5px;top:501.20px;font-size:12.4px;line-height:14px;letter-spacing:0.035px;color:#202020;width:181px;overflow:hidden;">5/8/2017 12:24:00 PM</div><div style="left:337px;top:500px;width:152px;height:16px;background:#ffffc6;border-right:1px solid #cacac6;border-bottom:1px solid #cacac6;"></div><div class="t" style="left:339px;top:501.20px;font-size:12.4px;line-height:14px;letter-spacing:-0.1px;color:#202020;width:150px;overflow:hidden;">Air Astana JSC</div><div style="left:0px;top:516px;width:48px;height:17px;background:#ffffc6;border-right:1px solid #000;border-bottom:1px solid #000;"></div><div class="t" style="left:2.799999999999997px;top:517.20px;font-size:12.4px;line-height:14px;letter-spacing:-0.1px;color:#202020;">24367</div><div style="left:48px;top:516px;width:104px;height:17px;background:#ffffc6;border-right:1px solid #cacac6;border-bottom:1px solid #cacac6;"></div><div class="t" style="left:50.8px;top:517.20px;font-size:12.4px;line-height:14px;letter-spacing:0px;color:#202020;width:100px;overflow:hidden;">WS0949.05.17</div><div style="left:152px;top:516px;width:185px;height:17px;background:#ffffc6;border-right:1px solid #cacac6;border-bottom:1px solid #cacac6;"></div><div class="t" style="left:155.5px;top:517.20px;font-size:12.4px;line-height:14px;letter-spacing:0.035px;color:#202020;width:181px;overflow:hidden;">5/8/2017 10:54:00 AM</div><div style="left:337px;top:516px;width:152px;height:17px;background:#ffffc6;border-right:1px solid #cacac6;border-bottom:1px solid #cacac6;"></div><div class="t" style="left:339px;top:517.20px;font-size:12.4px;line-height:14px;letter-spacing:-0.1px;color:#202020;width:150px;overflow:hidden;">SkyTaxi sp. z o.o.</div><div style="left:0px;top:533px;width:48px;height:17px;background:#d6d3ce;border-right:1px solid #000;border-bottom:1px solid #000;box-shadow:inset 1px 1px 0 #fff,inset -1px -1px 0 #848284;"></div><div class="t" style="left:2.799999999999997px;top:534.20px;font-size:12.4px;line-height:14px;letter-spacing:-0.1px;color:#202020;">24366</div><div style="left:48px;top:533px;width:104px;height:17px;background:#fff;border-right:1px solid #cacac6;border-bottom:1px solid #cacac6;"></div><div class="t" style="left:50.8px;top:534.20px;font-size:12.4px;line-height:14px;letter-spacing:0px;color:#202020;width:100px;overflow:hidden;">WS0948.05.17</div><div style="left:152px;top:533px;width:185px;height:17px;background:#fff;border-right:1px solid #cacac6;border-bottom:1px solid #cacac6;"></div><div class="t" style="left:155.5px;top:534.20px;font-size:12.4px;line-height:14px;letter-spacing:0.035px;color:#202020;width:181px;overflow:hidden;">5/8/2017 8:58:00 AM</div><div style="left:337px;top:533px;width:152px;height:17px;background:#fff;border-right:1px solid #cacac6;border-bottom:1px solid #cacac6;"></div><div class="t" style="left:339px;top:534.20px;font-size:12.4px;line-height:14px;letter-spacing:-0.1px;color:#202020;width:150px;overflow:hidden;">Swiftair S.A.</div></div>
<div style="left:520px;top:145px;width:13px;height:541px;background:#eae9e6;"></div>
<div style="left:520px;top:145px;width:13px;height:13px;background:#d6d3ce;border:1px solid;border-color:#fff #424142 #424142 #fff;box-shadow:inset -1px -1px 0 #848284,inset 1px 1px 0 #d6d3ce;"></div>
<svg class="a" style="left:523px;top:149px" width="7" height="4"><path d="M0 4h7l-3.5-4z" fill="#000"/></svg>
<div style="left:520px;top:158px;width:13px;height:14px;background:#d6d3ce;border:1px solid;border-color:#fff #424142 #424142 #fff;box-shadow:inset -1px -1px 0 #848284,inset 1px 1px 0 #d6d3ce;"></div>
<div style="left:520px;top:673px;width:13px;height:13px;background:#d6d3ce;border:1px solid;border-color:#fff #424142 #424142 #fff;box-shadow:inset -1px -1px 0 #848284,inset 1px 1px 0 #d6d3ce;"></div>
<svg class="a" style="left:523px;top:677px" width="7" height="4"><path d="M0 0h7l-3.5 4z" fill="#000"/></svg>
<div style="left:31px;top:686px;width:489px;height:13px;background:#eae9e6;"></div>
<div style="left:31px;top:686px;width:13px;height:13px;background:#d6d3ce;border:1px solid;border-color:#fff #424142 #424142 #fff;box-shadow:inset -1px -1px 0 #848284,inset 1px 1px 0 #d6d3ce;"></div>
<svg class="a" style="left:35px;top:689px" width="4" height="7"><path d="M4 0v7l-4-3.5z" fill="#000"/></svg>
<div style="left:44px;top:686px;width:14px;height:13px;background:#d6d3ce;border:1px solid;border-color:#fff #424142 #424142 #fff;box-shadow:inset -1px -1px 0 #848284,inset 1px 1px 0 #d6d3ce;"></div>
<div style="left:506px;top:686px;width:13px;height:13px;background:#d6d3ce;border:1px solid;border-color:#fff #424142 #424142 #fff;box-shadow:inset -1px -1px 0 #848284,inset 1px 1px 0 #d6d3ce;"></div>
<svg class="a" style="left:510px;top:689px" width="4" height="7"><path d="M0 0v7l4-3.5z" fill="#000"/></svg>
<div style="left:519px;top:686px;width:14px;height:13px;background:#d6d3ce;"></div>
<div style="left:28px;top:704px;width:176px;height:13px;border:1px solid;border-color:#848284 #fff #fff #848284;"></div>
<div class="t" style="left:32px;top:705.03px;font-size:8px;line-height:10px;color:#000;letter-spacing:0.040px;">Found 199 Work Orders</div>
<div style="left:548px;top:88px;width:6px;height:1px;background:#848284;"></div>
<div style="left:549px;top:89px;width:5px;height:1px;background:#fff;"></div>
<div style="left:1081px;top:88px;width:283px;height:1px;background:#848284;"></div>
<div style="left:1082px;top:89px;width:282px;height:1px;background:#fff;"></div>
<div style="left:548px;top:88px;width:1px;height:80px;background:#848284;"></div>
<div style="left:549px;top:89px;width:1px;height:79px;background:#fff;"></div>
<div style="left:1363px;top:88px;width:1px;height:80px;background:#848284;"></div>
<div style="left:1364px;top:88px;width:1px;height:81px;background:#fff;"></div>
<div class="t" style="left:556.4px;top:78.91px;font-size:17px;line-height:20px;color:#000080;font-weight:bold;letter-spacing:-0.054px;">Service WO Strip Down Report Editor / DEFECT RECTIFICATION:</div>
<div style="left:562px;top:95px;width:550px;height:17px;background:#d6d3ce;"></div>
<div class="t" style="left:503px;width:400px;text-align:center;top:96.32px;font-size:13.5px;line-height:16px;color:#424142;letter-spacing:-0.435px;">PN:</div>
<div class="t" style="left:777px;width:400px;text-align:center;top:96.32px;font-size:13.5px;line-height:16px;color:#424142;letter-spacing:-0.302px;">SN:</div>
<div style="left:562px;top:113px;width:267px;height:23px;background:#e7e3e7;border:1px solid;border-color:#848284 #fff #fff #848284;box-shadow:inset 1px 1px 0 #424142,inset -1px -1px 0 #d6d3ce;"></div>
<div style="left:815px;top:115px;width:13px;height:20px;background:#d6d3ce;border:1px solid;border-color:#fff #424142 #424142 #fff;box-shadow:inset -1px -1px 0 #848284,inset 1px 1px 0 #d6d3ce;"></div>
<svg class="a" style="left:817px;top:123px" width="7" height="4"><path d="M0 0h7l-3.5 4z" fill="#000"/></svg>
<div class="t" style="left:564px;top:114.65px;font-size:14px;line-height:17px;color:#000;font-weight:bold;letter-spacing:0.201px;">000021XX</div>
<div style="left:843px;top:112px;width:269px;height:26px;background:#e7e3e7;border:1px solid #000;"></div>
<div class="t" style="left:777px;width:400px;text-align:center;top:114.15px;font-size:14px;line-height:17px;color:#000;font-weight:bold;">sdfsa</div>
<div class="t" style="left:582.4px;top:142.32px;font-size:13.5px;line-height:16px;color:#424142;letter-spacing:0.111px;">Description:</div>
<div style="left:674px;top:141px;width:438px;height:26px;background:#e7e3e7;border:1px solid #000;"></div>
<div class="t" style="left:675.8px;top:142.65px;font-size:14px;line-height:17px;color:#000;font-weight:bold;letter-spacing:0.002px;">LIFEJACKET TYPE 102 Mk. 2BA</div>
<div style="left:1124px;top:91px;width:227px;height:37px;background:#e7e3e7;border:1px solid;border-color:#848284 #fff #fff #848284;box-shadow:inset 1px 1px 0 #a0a0a0;"></div>
<div class="t" style="left:1037px;width:400px;text-align:center;top:91.94px;font-size:25px;line-height:30px;color:#000;font-weight:bold;letter-spacing:0.051px;">WS0002.08.20</div>
<div class="t" style="left:1170px;top:142.32px;font-size:13.5px;line-height:16px;color:#202020;letter-spacing:-0.077px;">Treatment:</div>
<div style="left:1251px;top:142px;width:98px;height:22px;background:#e7e3e7;border:1px solid;border-color:#848284 #fff #fff #848284;box-shadow:inset 1px 1px 0 #424142,inset -1px -1px 0 #d6d3ce;"></div>
<div style="left:1335px;top:144px;width:13px;height:19px;background:#d6d3ce;border:1px solid;border-color:#fff #424142 #424142 #fff;box-shadow:inset -1px -1px 0 #848284,inset 1px 1px 0 #d6d3ce;"></div>
<svg class="a" style="left:1337px;top:151px" width="7" height="4"><path d="M0 0h7l-3.5 4z" fill="#000"/></svg>
<div class="t" style="left:1254px;top:143.65px;font-size:14px;line-height:17px;color:#000;font-weight:bold;letter-spacing:-0.108px;">BMT</div>
<div style="left:548px;top:176px;width:6px;height:1px;background:#848284;"></div>
<div style="left:549px;top:177px;width:5px;height:1px;background:#fff;"></div>
<div style="left:621px;top:176px;width:208px;height:1px;background:#848284;"></div>
<div style="left:622px;top:177px;width:207px;height:1px;background:#fff;"></div>
<div style="left:1028px;top:176px;width:336px;height:1px;background:#848284;"></div>
<div style="left:1029px;top:177px;width:335px;height:1px;background:#fff;"></div>
<div style="left:548px;top:176px;width:1px;height:234px;background:#848284;"></div>
<div style="left:549px;top:177px;width:1px;height:233px;background:#fff;"></div>
<div style="left:1363px;top:176px;width:1px;height:234px;background:#848284;"></div>
<div style="left:1364px;top:176px;width:1px;height:235px;background:#fff;"></div>
<div style="left:548px;top:409px;width:816px;height:1px;background:#848284;"></div>
<div style="left:548px;top:410px;width:817px;height:1px;background:#fff;"></div>
<div class="t" style="left:556.4px;top:167.95px;font-size:14px;line-height:17px;color:#000;font-weight:bold;letter-spacing:-0.042px;">Findings:</div>
<div class="t" style="left:571.6px;top:191.28px;font-size:16.5px;line-height:20px;color:#000;letter-spacing:0.030px;">Employee No.:</div>
<div class="t" style="left:688px;top:190px;font-size:13px;line-height:13px;color:#e00000;">*</div>
<div style="left:703px;top:191px;width:113px;height:26px;background:#fff;border:1px solid;border-color:#848284 #fff #fff #848284;box-shadow:inset 1px 1px 0 #424142,inset -1px -1px 0 #d6d3ce;"></div>
<div style="left:801px;top:193px;width:14px;height:23px;background:#d6d3ce;border:1px solid;border-color:#fff #424142 #424142 #fff;box-shadow:inset -1px -1px 0 #848284,inset 1px 1px 0 #d6d3ce;"></div>
<svg class="a" style="left:804px;top:202px" width="7" height="4"><path d="M0 0h7l-3.5 4z" fill="#000"/></svg>
<div class="t" style="left:705.2px;top:194.11px;font-size:17px;line-height:20px;color:#000080;font-weight:bold;letter-spacing:0.208px;">DEM</div>
<div class="t" style="left:854.8px;top:176.32px;font-size:13.5px;line-height:16px;color:#202020;letter-spacing:-0.262px;">Hour:</div>
<div class="t" style="left:913px;top:177px;font-size:13px;line-height:13px;color:#e00000;">*</div>
<div class="t" style="left:948.2px;top:176.32px;font-size:13.5px;line-height:16px;color:#202020;letter-spacing:-0.267px;">Minute:</div>
<div class="t" style="left:1012px;top:177px;font-size:13px;line-height:13px;color:#e00000;">*</div>
<div style="left:829px;top:192px;width:68px;height:28px;background:#fff;border:1px solid;border-color:#848284 #fff #fff #848284;box-shadow:inset 1px 1px 0 #424142,inset -1px -1px 0 #d6d3ce;"></div>
<div class="t" style="left:663px;width:400px;text-align:center;top:195.11px;font-size:17px;line-height:20px;color:#000080;font-weight:bold;">02</div>
<div style="left:899px;top:192px;width:14px;height:13px;background:#d6d3ce;border:1px solid;border-color:#fff #424142 #424142 #fff;box-shadow:inset -1px -1px 0 #848284,inset 1px 1px 0 #d6d3ce;"></div>
<svg class="a" style="left:902px;top:196px" width="7" height="4"><path d="M0 4h7l-3.500-4z" fill="#000"/></svg>
<div style="left:899px;top:207px;width:14px;height:13px;background:#d6d3ce;border:1px solid;border-color:#fff #424142 #424142 #fff;box-shadow:inset -1px -1px 0 #848284,inset 1px 1px 0 #d6d3ce;"></div>
<svg class="a" style="left:902px;top:211px" width="7" height="4"><path d="M0 0h7l-3.500 4z" fill="#000"/></svg>
<div style="left:927px;top:192px;width:55px;height:28px;background:#fff;border:1px solid;border-color:#848284 #fff #fff #848284;box-shadow:inset 1px 1px 0 #424142,inset -1px -1px 0 #d6d3ce;"></div>
<div class="t" style="left:754.5px;width:400px;text-align:center;top:195.11px;font-size:17px;line-height:20px;color:#000080;font-weight:bold;">00</div>
<div style="left:983px;top:192px;width:14px;height:13px;background:#d6d3ce;border:1px solid;border-color:#fff #424142 #424142 #fff;box-shadow:inset -1px -1px 0 #848284,inset 1px 1px 0 #d6d3ce;"></div>
<svg class="a" style="left:986px;top:196px" width="7" height="4"><path d="M0 4h7l-3.500-4z" fill="#000"/></svg>
<div style="left:983px;top:207px;width:14px;height:13px;background:#d6d3ce;border:1px solid;border-color:#fff #424142 #424142 #fff;box-shadow:inset -1px -1px 0 #848284,inset 1px 1px 0 #d6d3ce;"></div>
<svg class="a" style="left:986px;top:211px" width="7" height="4"><path d="M0 0h7l-3.500 4z" fill="#000"/></svg>
<div style="left:1026px;top:185px;width:321px;height:21px;border:1px solid;border-color:#fff #848284 #848284 #fff;"></div>
<div style="left:1029px;top:188px;width:1px;height:15px;background:#9a9894;"></div>
<div style="left:1030px;top:188px;width:1px;height:15px;background:#fff;"></div>
<svg class="a" style="left:1037px;top:188px" width="15" height="15" viewBox="0 0 15 15">
<path d="M4.500 3h3.500l2.500 3v5.200h-6z" fill="#30e8e0" stroke="#206868" stroke-width="1"/>
<path d="M7.800 1.600l3 4.400h-3z" fill="#102828"/>
<path d="M2.500 6.500h1M3 12h1M7.500 12.500h1M12.500 2.500h1M13 7.500h1M12.500 12h1M3 2.500h1" stroke="#202020" stroke-width="1"/></svg>
<div class="t" style="left:1068px;top:188.96px;font-size:10.5px;line-height:13px;color:#000;letter-spacing:-0.894px;">Add</div>
<div style="left:1090px;top:188px;width:1px;height:15px;background:#9a9894;"></div>
<div style="left:1091px;top:188px;width:1px;height:15px;background:#fff;"></div>
<svg class="a" style="left:1100px;top:189px" width="14" height="13" viewBox="0 0 14 13">
<rect x="0.500" y="0.500" width="4" height="5" fill="#848284" stroke="#848284"/><path d="M6 2h3.500v4" fill="none" stroke="#848284"/>
<path d="M7 6h5l-2.500 3z" fill="#848284"/><rect x="5.500" y="9.500" width="8" height="3" fill="#d6d3ce" stroke="#848284"/></svg>
<div class="t" style="left:1114.7px;top:188.96px;font-size:10.5px;line-height:13px;color:#848284;letter-spacing:-0.459px;text-shadow:1px 1px 0 #fff;">Update</div>
<div style="left:1152px;top:188px;width:1px;height:15px;background:#9a9894;"></div>
<div style="left:1153px;top:188px;width:1px;height:15px;background:#fff;"></div>
<div style="left:1159px;top:188px;width:1px;height:15px;background:#9a9894;"></div>
<div style="left:1160px;top:188px;width:1px;height:15px;background:#fff;"></div>
<svg class="a" style="left:1168px;top:188px" width="15" height="15" viewBox="0 0 15 15"><rect x="0" y="0" width="14" height="14" fill="#848284"/><rect x="3" y="3" width="1" height="2" fill="#fff"/><rect x="3" y="6" width="1" height="8" fill="#fff"/><path d="M0 14.500h15M14.500 0v15" stroke="#fff"/></svg>
<div class="t" style="left:1186.8px;top:188.96px;font-size:10.5px;line-height:13px;color:#848284;letter-spacing:-0.558px;text-shadow:1px 1px 0 #fff;">Delete</div>
<div style="left:1220px;top:188px;width:1px;height:15px;background:#9a9894;"></div>
<div style="left:1221px;top:188px;width:1px;height:15px;background:#fff;"></div>
<div style="left:562px;top:221px;width:789px;height:58px;background:#fff;border:1px solid #424142;"></div>
<div class="t" style="left:564px;top:222.95px;font-size:14px;line-height:17px;color:#000080;font-weight:bold;letter-spacing:-0.007px;">Life Jacket was deployd.</div>
<div style="left:1337px;top:222px;width:13px;height:56px;background:#eae9e6;"></div>
<div style="left:1337px;top:222px;width:13px;height:13px;background:#d6d3ce;border:1px solid;border-color:#fff #424142 #424142 #fff;box-shadow:inset -1px -1px 0 #848284,inset 1px 1px 0 #d6d3ce;"></div>
<svg class="a" style="left:1340px;top:226px" width="7" height="4"><path d="M0 4h7l-3.5-4z" fill="#8c8a86"/></svg>
<div style="left:1337px;top:265px;width:13px;height:13px;background:#d6d3ce;border:1px solid;border-color:#fff #424142 #424142 #fff;box-shadow:inset -1px -1px 0 #848284,inset 1px 1px 0 #d6d3ce;"></div>
<svg class="a" style="left:1340px;top:269px" width="7" height="4"><path d="M0 0h7l-3.5 4z" fill="#8c8a86"/></svg>
<div style="left:563px;top:285px;width:787px;height:115px;background:#848284;border:1px solid;border-color:#707070 #fff #fff #707070;box-shadow:inset -1px -1px 0 #e4e2de;"></div>
<div style="left:564px;top:286px;width:235px;height:17px;background:#d6d3ce;border:1px solid;border-color:#fff #424142 #424142 #fff;"></div>
<div class="t" style="left:566.4px;top:287.34px;font-size:12px;line-height:14px;color:#202020;letter-spacing:0.210px;">No Findings Text were Found !</div>
<div style="left:548px;top:420px;width:6px;height:1px;background:#848284;"></div>
<div style="left:549px;top:421px;width:5px;height:1px;background:#fff;"></div>
<div style="left:653px;top:420px;width:711px;height:1px;background:#848284;"></div>
<div style="left:654px;top:421px;width:710px;height:1px;background:#fff;"></div>
<div style="left:548px;top:420px;width:1px;height:322px;background:#848284;"></div>
<div style="left:549px;top:421px;width:1px;height:321px;background:#fff;"></div>
<div style="left:1363px;top:420px;width:1px;height:322px;background:#848284;"></div>
<div style="left:1364px;top:420px;width:1px;height:323px;background:#fff;"></div>
<div style="left:548px;top:741px;width:816px;height:1px;background:#848284;"></div>
<div style="left:548px;top:742px;width:817px;height:1px;background:#fff;"></div>
<div class="t" style="left:556.4px;top:413.15px;font-size:14px;line-height:17px;color:#000;font-weight:bold;letter-spacing:-0.106px;">Material Used:</div>
<div class="t" style="left:559.6px;top:433.78px;font-size:16.5px;line-height:20px;color:#000;letter-spacing:-0.369px;">PN:</div>
<div class="t" style="left:590px;top:431px;font-size:13px;line-height:13px;color:#e00000;">*</div>
<div style="left:600px;top:431px;width:223px;height:23px;background:#fff;border:1px solid;border-color:#848284 #fff #fff #848284;box-shadow:inset 1px 1px 0 #424142,inset -1px -1px 0 #d6d3ce;"></div>
<div style="left:809px;top:433px;width:13px;height:20px;background:#d6d3ce;border:1px solid;border-color:#fff #424142 #424142 #fff;box-shadow:inset -1px -1px 0 #848284,inset 1px 1px 0 #d6d3ce;"></div>
<svg class="a" style="left:811px;top:441px" width="7" height="4"><path d="M0 0h7l-3.5 4z" fill="#000"/></svg>
<div style="left:829px;top:438px;width:12px;height:12px;background:#fff;border:1px solid;border-color:#848284 #fff #fff #848284;box-shadow:inset 1px 1px 0 #424142,inset -1px -1px 0 #d6d3ce;"></div>
<div class="t" style="left:846px;top:435.15px;font-size:14px;line-height:17px;color:#c00000;font-weight:bold;letter-spacing:-0.136px;">Additional:</div>
<div style="left:955px;top:429px;width:392px;height:22px;border:1px solid;border-color:#fff #848284 #848284 #fff;"></div>
<div style="left:958px;top:432px;width:1px;height:16px;background:#9a9894;"></div>
<div style="left:959px;top:432px;width:1px;height:16px;background:#fff;"></div>
<svg class="a" style="left:967px;top:433px" width="15" height="15" viewBox="0 0 15 15">
<path d="M4.500 3h3.500l2.500 3v5.200h-6z" fill="#30e8e0" stroke="#206868" stroke-width="1"/>
<path d="M7.800 1.600l3 4.400h-3z" fill="#102828"/>
<path d="M2.500 6.500h1M3 12h1M7.500 12.500h1M12.500 2.500h1M13 7.500h1M12.500 12h1M3 2.500h1" stroke="#202020" stroke-width="1"/></svg>
<div class="t" style="left:998px;top:433.46px;font-size:10.5px;line-height:13px;color:#000;letter-spacing:-0.894px;">Add</div>
<div style="left:1020px;top:432px;width:1px;height:16px;background:#9a9894;"></div>
<div style="left:1021px;top:432px;width:1px;height:16px;background:#fff;"></div>
<svg class="a" style="left:1030px;top:434px" width="14" height="13" viewBox="0 0 14 13">
<rect x="0.500" y="0.500" width="4" height="5" fill="#848284" stroke="#848284"/><path d="M6 2h3.500v4" fill="none" stroke="#848284"/>
<path d="M7 6h5l-2.500 3z" fill="#848284"/><rect x="5.500" y="9.500" width="8" height="3" fill="#d6d3ce" stroke="#848284"/></svg>
<div class="t" style="left:1044.7px;top:433.46px;font-size:10.5px;line-height:13px;color:#848284;letter-spacing:-0.459px;text-shadow:1px 1px 0 #fff;">Update</div>
<div style="left:1082px;top:432px;width:1px;height:16px;background:#9a9894;"></div>
<div style="left:1083px;top:432px;width:1px;height:16px;background:#fff;"></div>
<div style="left:1089px;top:432px;width:1px;height:16px;background:#9a9894;"></div>
<div style="left:1090px;top:432px;width:1px;height:16px;background:#fff;"></div>
<svg class="a" style="left:1098px;top:433px" width="15" height="15" viewBox="0 0 15 15"><rect x="0" y="0" width="14" height="14" fill="#848284"/><rect x="3" y="3" width="1" height="2" fill="#fff"/><rect x="3" y="6" width="1" height="8" fill="#fff"/><path d="M0 14.500h15M14.500 0v15" stroke="#fff"/></svg>
<div class="t" style="left:1116.8px;top:433.46px;font-size:10.5px;line-height:13px;color:#848284;letter-spacing:-0.558px;text-shadow:1px 1px 0 #fff;">Delete</div>
<div style="left:1150px;top:432px;width:1px;height:16px;background:#9a9894;"></div>
<div style="left:1151px;top:432px;width:1px;height:16px;background:#fff;"></div>
<div style="left:1335px;top:413px;width:29px;height:27px;background:#c6c3ff;border:1px solid;border-color:#fff #424142 #424142 #fff;box-shadow:inset -1px -1px 0 #848284,inset 1px 1px 0 #d6d3ce;"></div>
<svg class="a" style="left:1342px;top:418px" width="14" height="16" viewBox="0 0 14 16"><rect x="0" y="0" width="14" height="15" fill="#c8c8b8" fill-opacity=".35"/><path d="M6.800 1l4.500 7.300h-3.500v5.500h-2v-5.500h-3.500z" fill="#000"/></svg>
<div class="t" style="left:673.6px;top:465.28px;font-size:16.5px;line-height:20px;color:#000;letter-spacing:0.074px;">Description:</div>
<div class="t" style="left:772px;top:465px;font-size:13px;line-height:13px;color:#e00000;">*</div>
<div class="t" style="left:931px;top:465.28px;font-size:16.5px;line-height:20px;color:#000;letter-spacing:-0.143px;">Batch No.:</div>
<div class="t" style="left:1053.2px;top:465.28px;font-size:16.5px;line-height:20px;color:#000;letter-spacing:0.146px;">Item:</div>
<div class="t" style="left:1130.6px;top:465.28px;font-size:16.5px;line-height:20px;color:#000;letter-spacing:-0.063px;">Qty:</div>
<div class="t" style="left:1166px;top:465px;font-size:13px;line-height:13px;color:#e00000;">*</div>
<div class="t" style="left:1204.4px;top:465.28px;font-size:16.5px;line-height:20px;color:#000;letter-spacing:-0.345px;">Unit:</div>
<div class="t" style="left:1240px;top:465px;font-size:13px;line-height:13px;color:#e00000;">*</div>
<div class="t" style="left:1293.6px;top:465.28px;font-size:16.5px;line-height:20px;color:#000;letter-spacing:0.037px;">Price:</div>
<div style="left:562px;top:487px;width:339px;height:25px;background:#fff;border:1px solid #000;"></div>
<div style="left:903px;top:487px;width:129px;height:25px;background:#fff;border:1px solid #000;"></div>
<div style="left:1036px;top:487px;width:72px;height:25px;background:#fff;border:1px solid #000;"></div>
<div style="left:1110px;top:487px;width:72px;height:25px;background:#fff;border:1px solid #000;"></div>
<div style="left:1271px;top:487px;width:87px;height:25px;background:#fff;border:1px solid #000;"></div>
<div style="left:1185px;top:487px;width:84px;height:23px;background:#fff;border:1px solid;border-color:#848284 #fff #fff #848284;box-shadow:inset 1px 1px 0 #424142,inset -1px -1px 0 #d6d3ce;"></div>
<div style="left:1255px;top:489px;width:13px;height:20px;background:#d6d3ce;border:1px solid;border-color:#fff #424142 #424142 #fff;box-shadow:inset -1px -1px 0 #848284,inset 1px 1px 0 #d6d3ce;"></div>
<svg class="a" style="left:1257px;top:497px" width="7" height="4"><path d="M0 0h7l-3.5 4z" fill="#000"/></svg>
<div class="t" style="left:946px;width:400px;text-align:center;top:487.65px;font-size:14px;line-height:17px;color:#000080;font-weight:bold;">1</div>
<div class="t" style="left:1188px;top:488.65px;font-size:14px;line-height:17px;color:#000080;font-weight:bold;letter-spacing:-0.475px;">EA</div>
<div class="t" style="left:1114px;width:400px;text-align:center;top:487.65px;font-size:14px;line-height:17px;color:#000080;font-weight:bold;">0.00</div>
<div style="left:563px;top:520px;width:787px;height:219px;background:#848284;border:1px solid;border-color:#707070 #fff #fff #707070;box-shadow:inset -1px -1px 0 #e4e2de;"></div>
<div style="left:564px;top:521px;width:235px;height:17px;background:#d6d3ce;border:1px solid;border-color:#fff #424142 #424142 #fff;"></div>
<div class="t" style="left:566.4px;top:522.34px;font-size:12px;line-height:14px;color:#202020;letter-spacing:0.185px;">No Used Materials were Found !</div>
<svg class="a" style="left:740px;top:180px" width="160" height="170" viewBox="740 180 160 170">
<path d="M754.300 199.300L858 298.500L827.500 318z" fill="#0a9af8"/>
<circle cx="848" cy="315.200" r="21.300" fill="#ecebea"/>
<circle cx="848" cy="315.200" r="20.600" fill="#141414"/>
<circle cx="848" cy="315.200" r="19.500" fill="#fff"/>
<circle cx="848" cy="315.200" r="18.800" fill="#0a9af8"/>
<text x="848.600" y="323.200" text-anchor="middle" font-family="Liberation Sans,sans-serif" font-weight="bold" font-size="21" fill="#fff">7</text></svg>
</body></html>
